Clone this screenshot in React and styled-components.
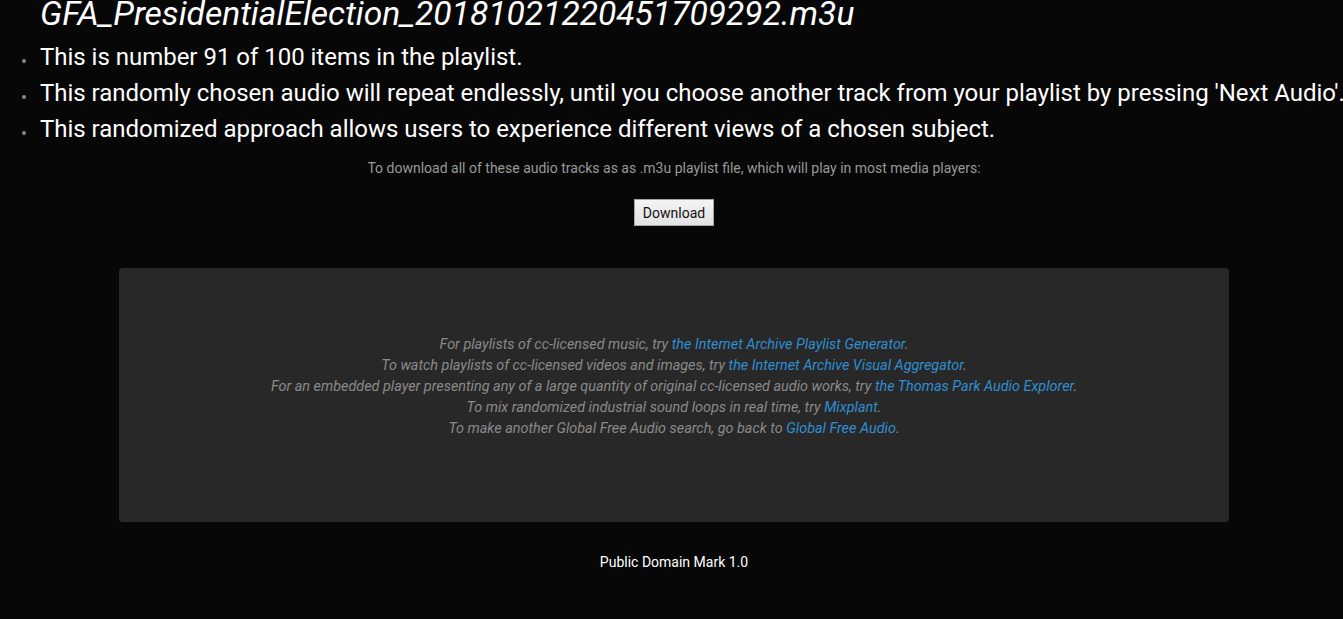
import React from 'react';
import styled, { createGlobalStyle } from 'styled-components';

const GlobalStyle = createGlobalStyle`
  html, body {
    margin: 0;
    padding: 0;
    background: #070707;
    font-family: Roboto, 'Liberation Sans', sans-serif;
    color: #ffffff;
  }
`;

const Page = styled.div`
  display: flex;
  flex-direction: column;
  min-height: 619px;
  overflow: hidden;
`;

const Title = styled.h1`
  margin: -6px 0 0 40px;
  font-size: 33.6px;
  font-weight: 400;
  font-style: italic;
  line-height: 40px;
  white-space: nowrap;
`;

const Bullets = styled.ul`
  margin: 5px 0 0;
  padding: 0 0 0 22px;
  list-style: none;
`;

const Bullet = styled.li`
  display: flex;
  align-items: center;
  font-size: 24px;
  line-height: 36px;
  letter-spacing: -0.02px;
  white-space: nowrap;
  &::before {
    content: '';
    flex: none;
    width: 4px;
    height: 4px;
    border-radius: 50%;
    background: #888;
    margin: 7px 14px 0 0;
  }
`;

const Center = styled.div`
  display: flex;
  flex-direction: column;
  align-items: center;
  padding-left: 5px;
`;

const Note = styled.p`
  margin: 13px 0 0;
  font-size: 14px;
  line-height: 16px;
  color: #999;
`;

const Button = styled.button`
  box-sizing: border-box;
  margin-top: 23px;
  height: 27px;
  padding: 0 8px;
  font-family: Roboto, 'Liberation Sans', sans-serif;
  font-size: 14px;
  color: #111;
  background: linear-gradient(#f4f4f4, #e2e2e2);
  border: 1px solid #a5a5a5;
  border-radius: 0;
`;

const Panel = styled.div`
  box-sizing: border-box;
  margin-top: 42px;
  width: 1110px;
  height: 254px;
  padding-top: 66px;
  background: #282828;
  border-radius: 4px;
  display: flex;
  flex-direction: column;
  align-items: center;
`;

const Line = styled.div`
  font-size: 14.4px;
  line-height: 21px;
  font-style: italic;
  color: #8a8a8a;
`;

const Link = styled.a`
  color: #2e8fd2;
  text-decoration: none;
`;

const Footer = styled.div`
  margin-top: 32px;
  font-size: 14px;
  line-height: 16px;
  color: #fff;
`;

const links = [
  ['For playlists of cc-licensed music, try ', 'the Internet Archive Playlist Generator'],
  ['To watch playlists of cc-licensed videos and images, try ', 'the Internet Archive Visual Aggregator'],
  [
    'For an embedded player presenting any of a large quantity of original cc-licensed audio works, try ',
    'the Thomas Park Audio Explorer',
  ],
  ['To mix randomized industrial sound loops in real time, try ', 'Mixplant'],
  ['To make another Global Free Audio search, go back to ', 'Global Free Audio'],
];

export default function App() {
  return (
    <Page>
      <GlobalStyle />
      <Title>GFA_PresidentialElection_20181021220451709292.m3u</Title>
      <Bullets>
        <Bullet>This is number 91 of 100 items in the playlist.</Bullet>
        <Bullet>
          This randomly chosen audio will repeat endlessly, until you choose another track from your
          playlist by pressing 'Next Audio'.
        </Bullet>
        <Bullet>This randomized approach allows users to experience different views of a chosen subject.</Bullet>
      </Bullets>
      <Center>
        <Note>
          To download all of these audio tracks as as .m3u playlist file, which will play in most media
          players:
        </Note>
        <Button>Download</Button>
        <Panel>
          {links.map(([text, label]) => (
            <Line key={label}>
              {text}
              <Link href="#">{label}</Link>.
            </Line>
          ))}
        </Panel>
        <Footer>Public Domain Mark 1.0</Footer>
      </Center>
    </Page>
  );
}
